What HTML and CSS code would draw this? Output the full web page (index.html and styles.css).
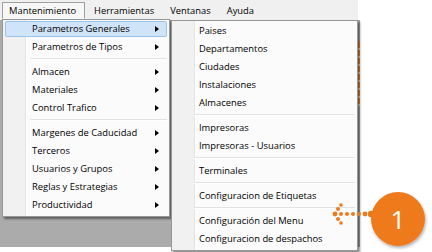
FILE: index.html
```html
<!DOCTYPE html>
<html lang="es">
<head>
    <meta charset="UTF-8">
    <title>Menu</title>
    <link rel="stylesheet" href="styles.css">
</head>
<body>
    <div class="window">
        <div class="menubar">
            <span class="top-item open">Mantenimiento</span>
            <span class="top-item">Herramientas</span>
            <span class="top-item">Ventanas</span>
            <span class="top-item">Ayuda</span>
        </div>
        <div class="client">
            <div class="strip"></div>
        </div>

        <div class="menu main">
            <div class="item active">Parametros Generales<i class="arrow"></i></div>
            <div class="item">Parametros de Tipos<i class="arrow"></i></div>
            <div class="sep"></div>
            <div class="item">Almacen<i class="arrow"></i></div>
            <div class="item">Materiales<i class="arrow"></i></div>
            <div class="item">Control Trafico<i class="arrow"></i></div>
            <div class="sep"></div>
            <div class="item">Margenes de Caducidad<i class="arrow"></i></div>
            <div class="item">Terceros<i class="arrow"></i></div>
            <div class="item">Usuarios y Grupos<i class="arrow"></i></div>
            <div class="item">Reglas y Estrategias<i class="arrow"></i></div>
            <div class="item">Productividad<i class="arrow"></i></div>
        </div>

        <div class="menu sub">
            <div class="item">Paises</div>
            <div class="item">Departamentos</div>
            <div class="item">Ciudades</div>
            <div class="item">Instalaciones</div>
            <div class="item">Almacenes</div>
            <div class="sep"></div>
            <div class="item">Impresoras</div>
            <div class="item">Impresoras - Usuarios</div>
            <div class="sep"></div>
            <div class="item">Terminales</div>
            <div class="sep"></div>
            <div class="item">Configuracion de Etiquetas</div>
            <div class="sep"></div>
            <div class="item">Configuración del Menu</div>
            <div class="item">Configuracion de despachos</div>
        </div>
    </div>

    <!-- callout over the screenshot -->
    <svg class="callout" width="102" height="70" viewBox="330 184 102 70">
        <defs>
            <filter id="sh" x="-20%" y="-20%" width="150%" height="150%">
                <feDropShadow dx="1" dy="2" stdDeviation="1.5" flood-color="#000" flood-opacity="0.3"/>
            </filter>
        </defs>
        <g fill="#ee7a1e">
            <circle cx="335" cy="214" r="2.4"/>
            <circle cx="338" cy="209" r="2"/>
            <circle cx="341" cy="205" r="1.8"/>
            <circle cx="338" cy="219" r="2"/>
            <circle cx="341" cy="223" r="1.8"/>
            <circle cx="341" cy="214" r="2"/>
            <circle cx="347" cy="214" r="2"/>
            <circle cx="353" cy="214" r="2"/>
            <circle cx="359" cy="214" r="2"/>
            <circle cx="365" cy="214" r="2.4"/>
            <circle cx="371" cy="214" r="3.2"/>
            <circle cx="398" cy="219" r="27" filter="url(#sh)"/>
        </g>
        <text x="398" y="229" class="num">1</text>
    </svg>
</body>
</html>
```

FILE: styles.css
```css
*{
    margin: 0;
    padding: 0;
    box-sizing: border-box;
}

body{
    width: 432px;
    height: 252px;
    background: #fff;
    font-family: "Open Sans", "Liberation Sans", sans-serif;
    font-size: 9.4px;
    color: #000;
    position: relative;
    overflow: hidden;
}

.window{
    width: 360px;
    height: 247px;
    display: flex;
    flex-direction: column;
    position: relative;
}

.menubar{
    height: 20px;
    background: #f0f0f0;
    display: flex;
    align-items: center;
    padding-left: 2px;
    width: 358px;
}

.top-item{
    height: 16px;
    line-height: 15px;
    padding: 0 6px;
    margin-left: 2px;
    border: 1px solid transparent;
}

.top-item.open{
    border-color: #a0a0a0 #a0a0a0 transparent #a0a0a0;
    background: #f7f7f7;
    padding: 0 6px;
    margin-left: 0;
    width: 83px;
    height: 17px;
    margin-top: 1px;
}

.client{
    flex: 1;
    background: #ababab;
    position: relative;
}

.strip{
    position: absolute;
    left: 358px;
    top: 22px;
    width: 2px;
    height: 64px;
    background: repeating-linear-gradient(#e8862a 0 6px, #f2d3a8 6px 8px);
}

.menu{
    position: absolute;
    background: linear-gradient(to right, #f1f1f1 0 22px, #e3e3e3 22px 23px, #fff 23px 24px, #fbfbfb 24px);
    border: 1px solid #979797;
    box-shadow: 2px 2px 2px rgba(0, 0, 0, 0.45);
    padding-top: 1px;
    padding-bottom: 1px;
}

.main{
    left: 2px;
    top: 19px;
    width: 168px;
}

.sub{
    left: 171px;
    top: 20px;
    width: 187px;
    padding-top: 2px;
}

.item{
    height: 16px;
    margin: 0 2px 2px;
    line-height: 14px;
    padding-left: 26px;
    position: relative;
    border: 1px solid transparent;
    white-space: nowrap;
}

.sub .item{
    padding-left: 24px;
}

.item.active{
    background: #cfe4f8;
    border-color: #9cc4ea;
    border-radius: 2px;
}

.arrow{
    position: absolute;
    right: 7px;
    top: 3.5px;
    width: 0;
    height: 0;
    border-top: 3.5px solid transparent;
    border-bottom: 3.5px solid transparent;
    border-left: 4px solid #000;
}

.sep{
    height: 6px;
    margin-left: 27px;
    margin-right: 2px;
    margin-top: -1px;
    margin-bottom: 2px;
    background: linear-gradient(#e2e2e2, #e2e2e2) 0 2px / 100% 1px no-repeat,
                linear-gradient(#fff, #fff) 0 3px / 100% 1px no-repeat;
}

.sub .sep{
    margin-left: 22px;
}

.callout{
    position: absolute;
    left: 330px;
    top: 184px;
}

.num{
    fill: #fff;
    font-family: "Open Sans", sans-serif;
    font-size: 26px;
    text-anchor: middle;
}
```
